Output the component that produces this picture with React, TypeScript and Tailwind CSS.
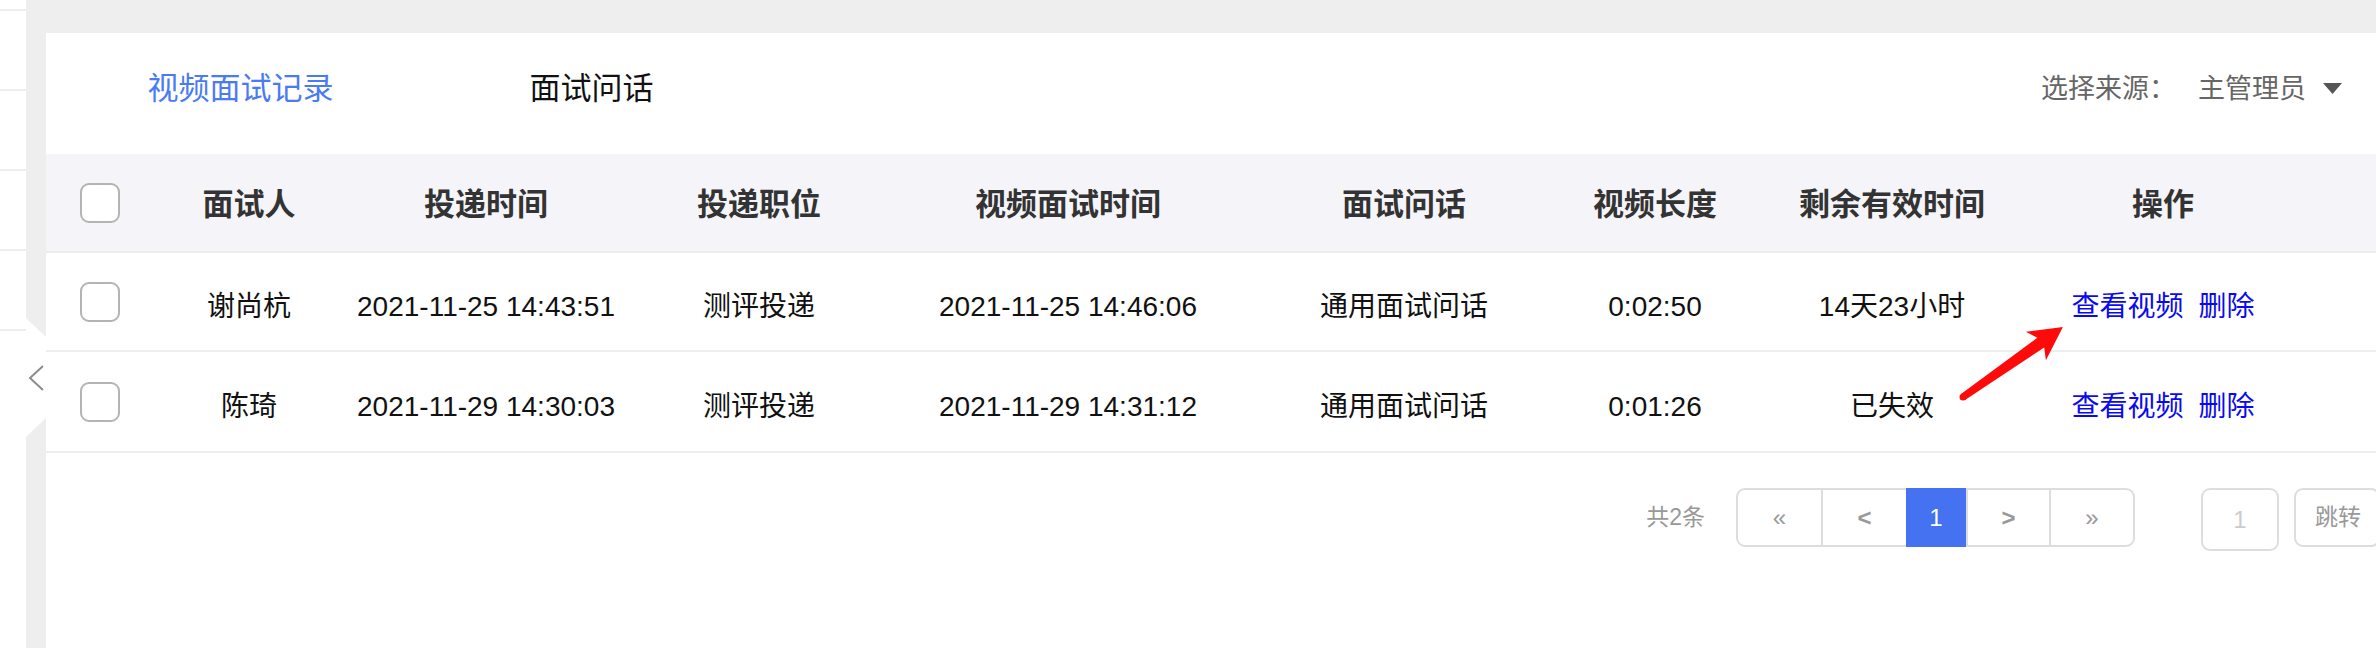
import React from "react"

const cols = [
    "w-[108px]",
    "w-[190px]",
    "w-[284px]",
    "w-[262px]",
    "w-[356px]",
    "w-[316px]",
    "w-[186px]",
    "w-[288px]",
    "w-[254px]",
]

const headers = ["面试人", "投递时间", "投递职位", "视频面试时间", "面试问话", "视频长度", "剩余有效时间", "操作"]

const records = [
    {
        name: "谢尚杭",
        sentAt: "2021-11-25 14:43:51",
        job: "测评投递",
        videoAt: "2021-11-25 14:46:06",
        questions: "通用面试问话",
        length: "0:02:50",
        remaining: "14天23小时",
    },
    {
        name: "陈琦",
        sentAt: "2021-11-29 14:30:03",
        job: "测评投递",
        videoAt: "2021-11-29 14:31:12",
        questions: "通用面试问话",
        length: "0:01:26",
        remaining: "已失效",
    },
]

const Checkbox = () => (
    <span className="block w-[40px] h-[40px] rounded-[9px] border-2 border-[#b4b4b4] bg-white" />
)

const App = () => {
    return (
        <div className="relative flex h-[648px] w-full overflow-hidden bg-[#eeeeee] font-[family-name:'Liberation_Sans','Noto_Sans_CJK_SC',sans-serif]">
            {/* left menu strip */}
            <div className="w-[26px] shrink-0 bg-white flex flex-col">
                <div className="h-[9px]" />
                <div className="h-[80px] border-t-2 border-[#eeeeee]" />
                <div className="h-[80px] border-t-2 border-[#eeeeee]" />
                <div className="h-[80px] border-t-2 border-[#eeeeee]" />
                <div className="h-[80px] border-t-2 border-[#eeeeee]" />
                <div className="border-t-2 border-[#eeeeee]" />
            </div>

            {/* collapse tab */}
            <div className="w-[20px] shrink-0 pt-[318px]">
                <svg width="20" height="119" viewBox="0 0 20 119" className="block">
                    <polygon points="0,0 20,19 20,100 0,119" fill="#ffffff" />
                    <polyline points="17,48 4,60 17,72" fill="none" stroke="#8c8c8c" strokeWidth="2" />
                </svg>
            </div>

            {/* main card */}
            <div className="flex-1 pt-[33px] flex flex-col">
                <div className="flex-1 bg-white flex flex-col">
                    {/* tabs */}
                    <div className="h-[121px] flex items-start pt-[40px]">
                        <div className="flex pl-[19px] text-[31px] leading-[32px]">
                            <div className="w-[351px] text-center text-[#4a7bf4]">视频面试记录</div>
                            <div className="w-[351px] text-center text-[#111111]">面试问话</div>
                        </div>
                        <div className="ml-auto pr-[34px] flex items-center text-[27px] leading-[32px] text-[#666666]">
                            <span>选择来源：</span>
                            <span className="ml-[22px]">主管理员</span>
                            <svg width="19" height="11" viewBox="0 0 19 11" className="ml-[17px] -mt-[2px]">
                                <polygon points="0,0 19,0 9.5,11" fill="#555555" />
                            </svg>
                        </div>
                    </div>

                    {/* table header */}
                    <div className="flex h-[99px] bg-[#f5f5f9] border-b-2 border-[#ececec] items-center text-[31px] font-bold text-[#333333]">
                        <div className={`${cols[0]} flex justify-center`}>
                            <Checkbox />
                        </div>
                        {headers.map((h, i) => (
                            <div key={h} className={`${cols[i + 1]} mt-[5px] text-center`}>
                                {h}
                            </div>
                        ))}
                    </div>

                    {/* rows */}
                    {records.map((r, idx) => (
                        <div
                            key={r.name}
                            className={`flex items-center border-b-2 border-[#eeeeee] text-[28px] text-[#111111] ${idx === 0 ? "h-[99px]" : "h-[101px]"}`}
                        >
                            <div className={`${cols[0]} flex justify-center`}>
                                <Checkbox />
                            </div>
                            <div className={`${cols[1]} mt-[11px] text-center`}>{r.name}</div>
                            <div className={`${cols[2]} mt-[11px] text-center`}>{r.sentAt}</div>
                            <div className={`${cols[3]} mt-[11px] text-center`}>{r.job}</div>
                            <div className={`${cols[4]} mt-[11px] text-center`}>{r.videoAt}</div>
                            <div className={`${cols[5]} mt-[11px] text-center`}>{r.questions}</div>
                            <div className={`${cols[6]} mt-[11px] text-center`}>{r.length}</div>
                            <div className={`${cols[7]} mt-[11px] text-center`}>{r.remaining}</div>
                            <div className={`${cols[8]} mt-[11px] flex justify-center gap-[15px] text-[#0a0af2]`}>
                                <span>查看视频</span>
                                <span>删除</span>
                            </div>
                        </div>
                    ))}

                    {/* pagination */}
                    <div className="mt-[35px] flex items-start justify-end">
                        <span className="mt-[14px] text-[23px] leading-[30px] text-[#999999]">共2条</span>
                        <div className="ml-[31px] flex h-[59px] border-2 border-[#dddddd] rounded-[9px] text-[#999999] text-[24px]">
                            <div className="w-[85px] border-r-2 border-[#dddddd] flex items-center justify-center">«</div>
                            <div className="w-[83px] flex items-center justify-center font-bold">&lt;</div>
                            <div className="w-[60px] -my-[2px] bg-[#4472f0] text-white text-[24px] flex items-center justify-center">1</div>
                            <div className="w-[85px] border-x-2 border-[#dddddd] flex items-center justify-center font-bold">&gt;</div>
                            <div className="w-[82px] flex items-center justify-center">»</div>
                        </div>
                        <div className="ml-[66px] w-[78px] h-[63px] border-2 border-[#dddddd] rounded-[9px] flex items-center justify-center text-[24px] text-[#cccccc]">
                            1
                        </div>
                        <div className="ml-[15px] -mr-[4px] w-[86px] h-[59px] border-2 border-[#dddddd] rounded-[9px] pl-[19px] flex items-center text-[23px] text-[#999999]">
                            跳转
                        </div>
                    </div>
                </div>
            </div>

            {/* annotation arrow */}
            <svg className="absolute left-0 top-0 pointer-events-none" width="2376" height="648" viewBox="0 0 2376 648">
                <polygon
                    points="1961,394.1 2037.4,337.7 2025.9,331.7 2062.9,327.1 2045.9,360.3 2044.2,347.5 1965,399.9"
                    fill="#ff0a0a"
                    strokeLinejoin="round"
                />
                <circle cx="1963" cy="397" r="3.5" fill="#ff0a0a" />
            </svg>
        </div>
    )
}

export default App
